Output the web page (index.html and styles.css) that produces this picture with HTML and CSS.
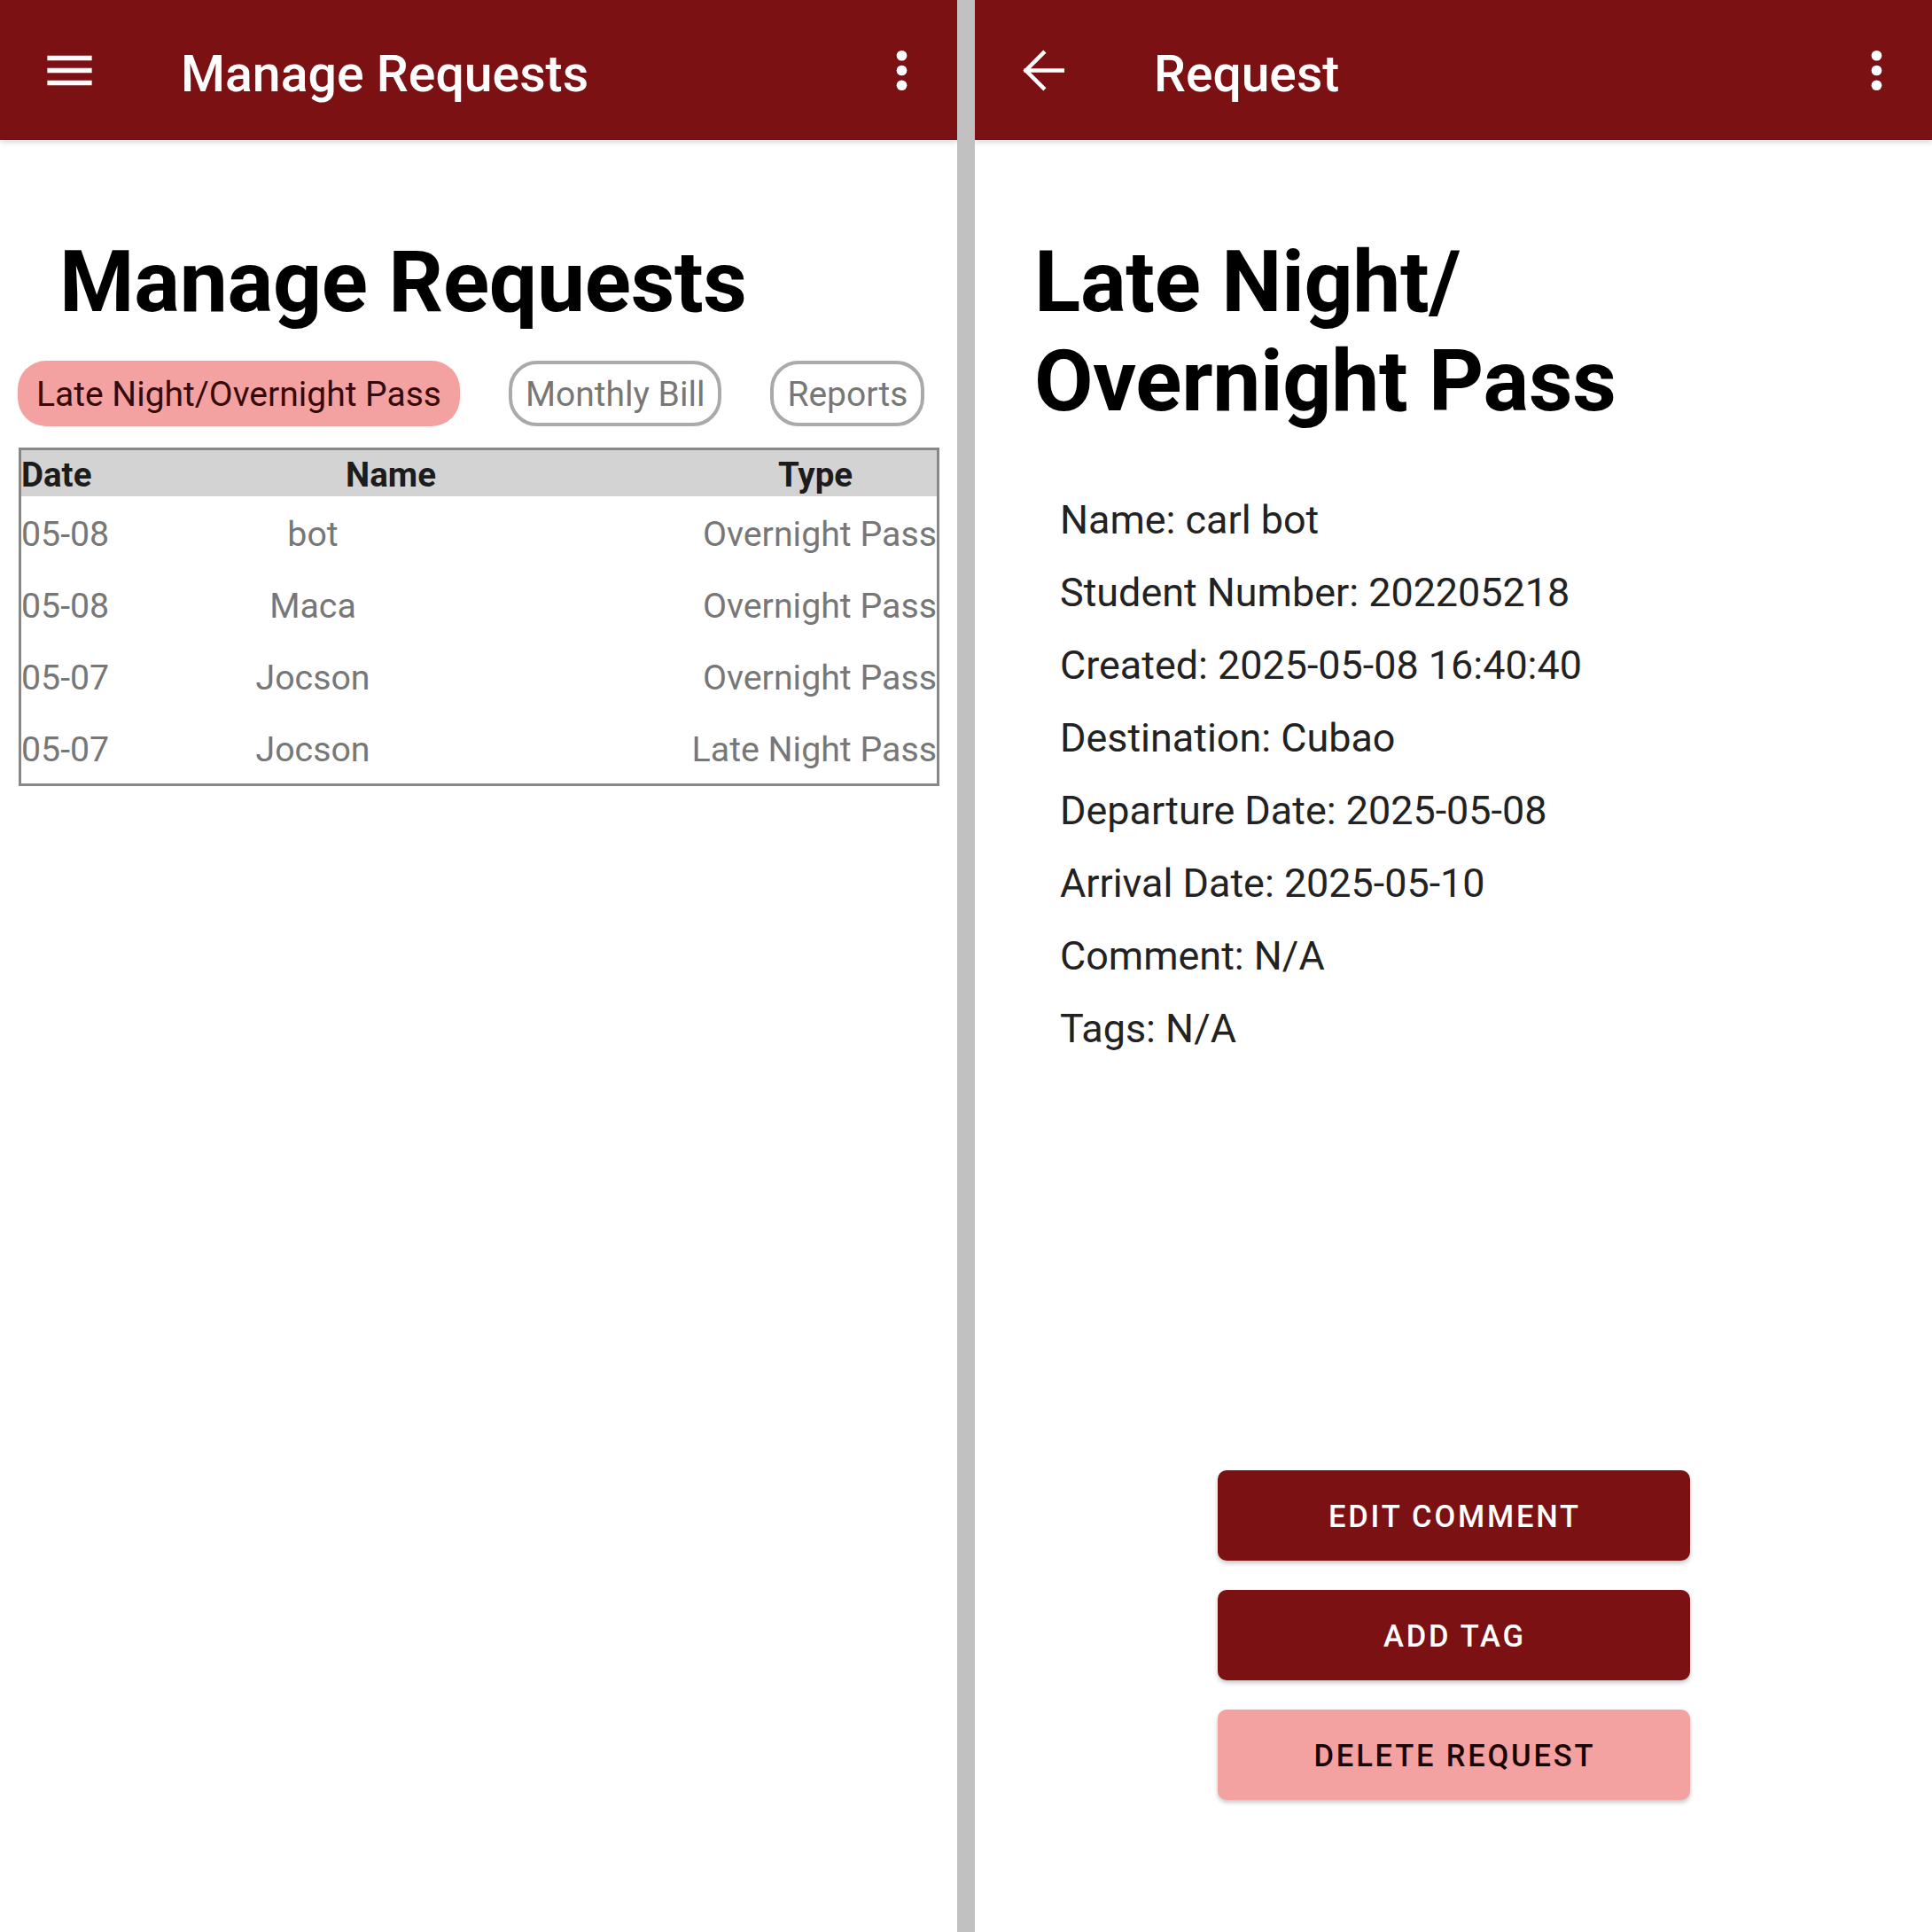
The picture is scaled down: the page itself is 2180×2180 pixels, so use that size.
FILE: index.html
```html
<!DOCTYPE html>
<html lang="en">
<head>
<meta charset="utf-8">
<title>Manage Requests</title>
<link rel="stylesheet" href="styles.css">
</head>
<body>
<div class="screen">
  <section class="panel">
    <header class="appbar">
      <svg class="appbar-icon" viewBox="0 0 24 24" aria-hidden="true"><path d="M3 18h18v-2H3v2zm0-5h18v-2H3v2zm0-7v2h18V6H3z"/></svg>
      <h1 class="appbar-title">Manage Requests</h1>
      <svg class="appbar-icon more" viewBox="0 0 24 24" aria-hidden="true"><circle cx="12" cy="6" r="2.1"/><circle cx="12" cy="12" r="2.1"/><circle cx="12" cy="18" r="2.1"/></svg>
    </header>
    <main class="content">
      <h2 class="page-title">Manage Requests</h2>
      <div class="chips">
        <span class="chip selected">Late Night/Overnight Pass</span>
        <span class="chip outline">Monthly Bill</span>
        <span class="chip outline">Reports</span>
      </div>
      <div class="table">
        <div class="thead">
          <span class="th th-date">Date</span>
          <span class="th th-name">Name</span>
          <span class="th th-type">Type</span>
        </div>
        <div class="tr"><span class="td">05-08</span><span class="td td-name">bot</span><span class="td td-type">Overnight Pass</span></div>
        <div class="tr"><span class="td">05-08</span><span class="td td-name">Maca</span><span class="td td-type">Overnight Pass</span></div>
        <div class="tr"><span class="td">05-07</span><span class="td td-name">Jocson</span><span class="td td-type">Overnight Pass</span></div>
        <div class="tr"><span class="td">05-07</span><span class="td td-name">Jocson</span><span class="td td-type">Late Night Pass</span></div>
      </div>
    </main>
  </section>
  <div class="divider"></div>
  <section class="panel">
    <header class="appbar">
      <svg class="appbar-icon back" viewBox="0 0 24 24" aria-hidden="true"><path d="M20 12H5.2M12.3 4.9L5.2 12l7.1 7.1" fill="none" stroke="#ffffff" stroke-width="1.6" stroke-linecap="square"/></svg>
      <h1 class="appbar-title title-request">Request</h1>
      <svg class="appbar-icon more" viewBox="0 0 24 24" aria-hidden="true"><circle cx="12" cy="6" r="2.1"/><circle cx="12" cy="12" r="2.1"/><circle cx="12" cy="18" r="2.1"/></svg>
    </header>
    <main class="content detail">
      <h2 class="page-title">Late Night/<br>Overnight Pass</h2>
      <div class="fields">
        <p>Name: carl bot</p>
        <p>Student Number: 202205218</p>
        <p>Created: 2025-05-08 16:40:40</p>
        <p>Destination: Cubao</p>
        <p>Departure Date: 2025-05-08</p>
        <p>Arrival Date: 2025-05-10</p>
        <p>Comment: N/A</p>
        <p>Tags: N/A</p>
      </div>
      <div class="actions">
        <button class="btn primary">Edit Comment</button>
        <button class="btn primary">Add Tag</button>
        <button class="btn danger">Delete Request</button>
      </div>
    </main>
  </section>
</div>
</body>
</html>
```

FILE: styles.css
```css
* { box-sizing: border-box; }

html, body {
  margin: 0;
  padding: 0;
  background: #ffffff;
}

body {
  font-family: Roboto, "Noto Sans", "Liberation Sans", sans-serif;
  color: #000;
}

.screen {
  display: flex;
  width: 2180px;
  height: 2180px;
  overflow: hidden;
}

.panel {
  width: 1080px;
  height: 2180px;
  display: flex;
  flex-direction: column;
  background: #ffffff;
}

.divider {
  width: 20px;
  height: 2180px;
  background: #c1c1c1;
  position: relative;
  z-index: 2;
}

.appbar {
  height: 158px;
  flex: 0 0 158px;
  background: #7b1113;
  display: flex;
  align-items: center;
  padding: 0 29px 0 45px;
  box-shadow: 0 3px 6px rgba(0, 0, 0, 0.14);
  position: relative;
  z-index: 1;
}

.appbar-icon {
  width: 67px;
  height: 67px;
  fill: #ffffff;
  flex: 0 0 67px;
}

.appbar-icon.back {
  margin-left: -2px;
}

.appbar-title {
  margin: 10px 0 0 92px;
  font-size: 57.2px;
  font-weight: 500;
  color: #ffffff;
  line-height: 1.2;
  flex: 1;
}

.appbar-title.title-request {
  font-size: 57px;
}

.content {
  flex: 1;
  display: flex;
  flex-direction: column;
}

.page-title {
  margin: 104px 0 0 67px;
  font-size: 96.6px;
  font-weight: 700;
  line-height: 112px;
  color: #000;
  letter-spacing: -0.3px;
}

/* chips */
.chips {
  display: flex;
  gap: 55px;
  margin: 33px 0 0 20px;
}

.chip {
  height: 74px;
  display: inline-flex;
  align-items: center;
  font-size: 39px;
  border-radius: 32px;
  white-space: nowrap;
  padding-top: 2px;
}

.chip.selected {
  background: #f4a1a1;
  color: #360a0a;
  padding-left: 21px;
  padding-right: 21px;
}

.chip.outline {
  border: 4.5px solid #aaaaaa;
  color: #777777;
  padding-left: 15px;
  padding-right: 15px;
}

/* table */
.table {
  margin: 24px 0 0 21px;
  width: 1039px;
  border: 3px solid #888888;
}

.thead {
  height: 52px;
  padding-top: 3px;
  background: #d3d3d3;
  display: grid;
  grid-template-columns: 250px 334px 175px 1fr;
  align-items: center;
  font-size: 38.5px;
  font-weight: 700;
  color: #1c1c1c;
}

.th-name { justify-self: center; }
.th-type { grid-column: 4; justify-self: center; }

.tr {
  height: 81px;
  padding-top: 4px;
  display: grid;
  grid-template-columns: 162px 334px 1fr;
  align-items: center;
  font-size: 39.3px;
  color: #777777;
}

.td-name { justify-self: center; }
.td-type { justify-self: end; }

/* detail */
.fields {
  margin: 60px 0 0 96px;
  display: flex;
  flex-direction: column;
}

.fields p {
  margin: 0;
  font-size: 44.9px;
  line-height: 82px;
  color: #222222;
}

.actions {
  margin-top: 457px;
  display: flex;
  flex-direction: column;
  align-items: center;
  gap: 33px;
}

.btn {
  width: 533px;
  height: 102px;
  border: none;
  border-radius: 10px;
  font-family: Roboto, "Noto Sans", "Liberation Sans", sans-serif;
  font-size: 34.5px;
  font-weight: 500;
  letter-spacing: 2.8px;
  text-indent: 2.8px;
  text-transform: uppercase;
  padding-top: 3px;
  box-shadow: 0 3px 5px rgba(0, 0, 0, 0.22);
}

.btn.primary {
  background: #7b1113;
  color: #ffffff;
}

.btn.danger {
  background: #f4a1a1;
  color: #1a0505;
}
```
